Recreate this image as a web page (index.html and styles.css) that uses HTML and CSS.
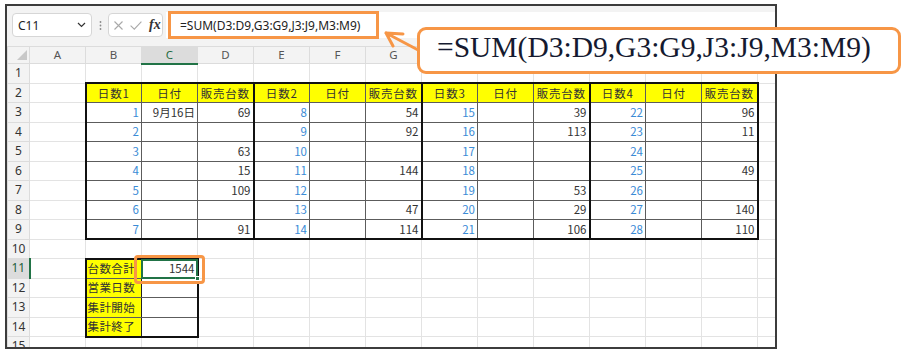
FILE: index.html
```html
<!DOCTYPE html>
<html lang="ja">
<head>
<meta charset="utf-8">
<title>Excel SUM</title>
<link rel="stylesheet" href="styles.css">
</head>
<body>
<div class="frame">
  <div class="toolbar">
    <div class="namebox"><span>C11</span>
      <svg class="chev" width="9" height="6" viewBox="0 0 9 6"><path d="M1 1L4.5 4.5L8 1" fill="none" stroke="#333" stroke-width="1.2"/></svg>
    </div>
    <div class="dots"><svg width="3" height="11" viewBox="0 0 3 11"><circle cx="1.5" cy="2" r="0.9" fill="#8a8a8a"/><circle cx="1.5" cy="5.5" r="0.9" fill="#8a8a8a"/><circle cx="1.5" cy="9" r="0.9" fill="#8a8a8a"/></svg></div>
    <div class="fxbox">
      <svg width="9" height="9" viewBox="0 0 9 9"><path d="M0.5 0.5L8.5 8.5M8.5 0.5L0.5 8.5" stroke="#a9a9a9" stroke-width="1.1"/></svg>
      <svg width="12" height="9" viewBox="0 0 12 9"><path d="M0.6 4.6L4.3 8.2L11.4 0.6" fill="none" stroke="#a9a9a9" stroke-width="1.1"/></svg>
      <span class="fx">fx</span>
    </div>
    <div class="formula"><span class="fhl">=SUM(D3:D9,G3:G9,J3:J9,M3:M9)</span></div>
  </div>
  <table class="sheet">
    <colgroup>
      <col class="c-rh"><col><col><col><col><col><col><col><col><col><col><col><col><col><col>
    </colgroup>
    <tr class="hdr">
      <th class="corner"><svg width="22" height="16" viewBox="0 0 22 16"><polygon points="19,3 19,13 9,13" fill="#c8c8c8"/></svg></th>
      <th>A</th><th>B</th><th class="csel">C</th><th>D</th><th>E</th><th>F</th><th>G</th><th>H</th><th>I</th><th>J</th><th>K</th><th>L</th><th>M</th><th>N</th>
    </tr>
    <tr><th class="rh">1</th><td></td><td></td><td></td><td></td><td></td><td></td><td></td><td></td><td></td><td></td><td></td><td></td><td></td><td></td></tr>
    <tr><th class="rh">2</th><td></td>
      <td class="d gl gt y">日数1</td><td class="d gt y">日付</td><td class="d gt y">販売台数</td>
      <td class="d gl gt y">日数2</td><td class="d gt y">日付</td><td class="d gt y">販売台数</td>
      <td class="d gl gt y">日数3</td><td class="d gt y">日付</td><td class="d gt y">販売台数</td>
      <td class="d gl gt y">日数4</td><td class="d gt y">日付</td><td class="d gt gr y">販売台数</td>
      <td></td></tr>
    <tr><th class="rh">3</th><td></td>
      <td class="d gl n">1</td><td class="d">9月16日</td><td class="d">69</td>
      <td class="d gl n">8</td><td class="d"></td><td class="d">54</td>
      <td class="d gl n">15</td><td class="d"></td><td class="d">39</td>
      <td class="d gl n">22</td><td class="d"></td><td class="d gr">96</td>
      <td></td></tr>
    <tr><th class="rh">4</th><td></td>
      <td class="d gl n">2</td><td class="d"></td><td class="d"></td>
      <td class="d gl n">9</td><td class="d"></td><td class="d">92</td>
      <td class="d gl n">16</td><td class="d"></td><td class="d">113</td>
      <td class="d gl n">23</td><td class="d"></td><td class="d gr">11</td>
      <td></td></tr>
    <tr><th class="rh">5</th><td></td>
      <td class="d gl n">3</td><td class="d"></td><td class="d">63</td>
      <td class="d gl n">10</td><td class="d"></td><td class="d"></td>
      <td class="d gl n">17</td><td class="d"></td><td class="d"></td>
      <td class="d gl n">24</td><td class="d"></td><td class="d gr"></td>
      <td></td></tr>
    <tr><th class="rh">6</th><td></td>
      <td class="d gl n">4</td><td class="d"></td><td class="d">15</td>
      <td class="d gl n">11</td><td class="d"></td><td class="d">144</td>
      <td class="d gl n">18</td><td class="d"></td><td class="d"></td>
      <td class="d gl n">25</td><td class="d"></td><td class="d gr">49</td>
      <td></td></tr>
    <tr><th class="rh">7</th><td></td>
      <td class="d gl n">5</td><td class="d"></td><td class="d">109</td>
      <td class="d gl n">12</td><td class="d"></td><td class="d"></td>
      <td class="d gl n">19</td><td class="d"></td><td class="d">53</td>
      <td class="d gl n">26</td><td class="d"></td><td class="d gr"></td>
      <td></td></tr>
    <tr><th class="rh">8</th><td></td>
      <td class="d gl n">6</td><td class="d"></td><td class="d"></td>
      <td class="d gl n">13</td><td class="d"></td><td class="d">47</td>
      <td class="d gl n">20</td><td class="d"></td><td class="d">29</td>
      <td class="d gl n">27</td><td class="d"></td><td class="d gr">140</td>
      <td></td></tr>
    <tr><th class="rh">9</th><td></td>
      <td class="d gl gb n">7</td><td class="d gb"></td><td class="d gb">91</td>
      <td class="d gl gb n">14</td><td class="d gb"></td><td class="d gb">114</td>
      <td class="d gl gb n">21</td><td class="d gb"></td><td class="d gb">106</td>
      <td class="d gl gb n">28</td><td class="d gb"></td><td class="d gb gr">110</td>
      <td></td></tr>
    <tr><th class="rh">10</th><td></td><td></td><td></td><td></td><td></td><td></td><td></td><td></td><td></td><td></td><td></td><td></td><td></td><td></td></tr>
    <tr><th class="rh rsel">11</th><td></td>
      <td class="d gl gt lbl">台数合計</td>
      <td class="d gr gt sel">1544<span class="selbox"></span><span class="handle"></span><span class="hl"></span></td>
      <td></td><td></td><td></td><td></td><td></td><td></td><td></td><td></td><td></td><td></td><td></td></tr>
    <tr><th class="rh">12</th><td></td>
      <td class="d gl lbl">営業日数</td><td class="d gr"></td>
      <td></td><td></td><td></td><td></td><td></td><td></td><td></td><td></td><td></td><td></td><td></td></tr>
    <tr><th class="rh">13</th><td></td>
      <td class="d gl lbl">集計開始</td><td class="d gr"></td>
      <td></td><td></td><td></td><td></td><td></td><td></td><td></td><td></td><td></td><td></td><td></td></tr>
    <tr><th class="rh">14</th><td></td>
      <td class="d gl gb lbl">集計終了</td><td class="d gr gb"></td>
      <td></td><td></td><td></td><td></td><td></td><td></td><td></td><td></td><td></td><td></td><td></td></tr>
    <tr><th class="rh">15</th><td></td><td></td><td></td><td></td><td></td><td></td><td></td><td></td><td></td><td></td><td></td><td></td><td></td><td></td></tr>
  </table>
</div>
<svg class="arrow" width="42" height="30" viewBox="0 0 42 30">
  <path d="M6 7L40 25M6 7L23 8M6 7L13 20" fill="none" stroke="#f79646" stroke-width="3" stroke-linecap="round"/>
</svg>
<div class="callout">=SUM(D3:D9,G3:G9,J3:J9,M3:M9)</div>
</body>
</html>
```
FILE: styles.css
```css
* { box-sizing: border-box; }
html, body { margin: 0; padding: 0; background: #fff; }
body {
  position: relative;
  width: 901px;
  height: 353px;
  overflow: hidden;
  font-family: "Noto Sans", "Noto Sans CJK JP", sans-serif;
}
.frame {
  margin: 4px 0 0 5px;
  width: 772px;
  height: 345px;
  border: 2px solid #3c3c3c;
  background: #f3f3f3;
  overflow: hidden;
}
.toolbar {
  display: flex;
  align-items: flex-start;
  height: 40px;
  padding: 7px 0 0 5px;
}
.namebox {
  width: 80px;
  height: 24px;
  background: #fff;
  border: 1px solid #d6d6d6;
  border-radius: 4px;
  display: flex;
  align-items: center;
  justify-content: space-between;
  padding: 0 5px 0 5px;
  font-size: 12px;
  color: #222;
}
.dots {
  width: 8px;
  height: 24px;
  margin-left: 4px;
  display: flex;
  align-items: center;
  justify-content: center;
}
.fxbox {
  margin-left: 4px;
  width: 55px;
  height: 24px;
  background: #fff;
  border: 1px solid #d6d6d6;
  border-radius: 4px;
  display: flex;
  align-items: center;
  padding-left: 5px;
  gap: 7px;
}
.fx {
  font-family: "Liberation Serif", serif;
  font-style: italic;
  font-weight: bold;
  font-size: 14px;
  color: #333;
  line-height: 1;
}
.formula {
  margin-left: 3px;
  margin-top: -1px;
  flex: 1;
  height: 26px;
  background: #fff;
  display: flex;
  align-items: flex-start;
}
.fhl {
  display: flex;
  align-items: center;
  height: 28px;
  margin: -1px 0 0 2px;
  border: 3px solid #f79646;
  padding: 0 16px 0 9px;
  font-size: 12px;
  color: #222;
  white-space: nowrap;
}

.sheet {
  border-collapse: collapse;
  table-layout: fixed;
  width: 806px;
  background: #fff;
  font-family: "Noto Sans CJK JP", "Noto Sans", sans-serif;
  font-size: 11.5px;
  color: #333;
}
.sheet col { width: 56px; }
.sheet col.c-rh { width: 22px; }
.sheet tr { height: 19.5px; }
.sheet tr.hdr { height: 16.5px; }
.sheet th {
  font-weight: normal;
  background: #f3f3f3;
  border: 1px solid #dcdcdc;
  padding: 0;
  font-family: "Noto Sans", sans-serif;
  font-size: 11.5px;
  line-height: 14px;
  color: #555;
}
.sheet th.corner { line-height: 0; vertical-align: bottom; }
.sheet th.rh { font-size: 12px; color: #333; text-align: center; }
.sheet th.csel {
  background: #dcdcdc;
  color: #1e6b41;
  border-bottom: 2px solid #217346;
}
.sheet th.rsel {
  background: #dcdcdc;
  color: #1e5e3a;
  border-right: 2px solid #217346;
}
.sheet td {
  border: 1px solid #e3e3e3;
  padding: 0 2px;
  line-height: 15px;
  text-align: right;
  white-space: nowrap;
}
.sheet td.d { border: 1px solid #5c5c5c; }
.sheet td.gl { border-left: 2px solid #111; }
.sheet td.gr { border-right: 2px solid #111; }
.sheet td.gt { border-top: 2px solid #111; }
.sheet td.gb { border-bottom: 2px solid #111; }
.sheet td.y {
  background: #ffff00;
  text-align: center;
  letter-spacing: 0.8px;
  padding: 0;
}
.sheet td.n { color: #3a8bd6; }
.sheet td.lbl {
  background: #ffff00;
  text-align: left;
  letter-spacing: 0.4px;
  padding-left: 1px;
  border-right-color: #222;
}
.sheet td.sel { position: relative; }
.selbox {
  position: absolute;
  left: -1px;
  top: -1px;
  right: -1px;
  bottom: -1px;
  border: 2px solid #217346;
}
.handle {
  position: absolute;
  right: -3px;
  bottom: -3px;
  width: 5px;
  height: 5px;
  background: #217346;
  border: 1px solid #fff;
}
.hl {
  position: absolute;
  left: -8px;
  top: -5px;
  right: -8px;
  bottom: -6px;
  border: 3.5px solid #f79646;
  border-radius: 4px;
}

.arrow {
  position: absolute;
  left: 380px;
  top: 26px;
}
.callout {
  position: absolute;
  left: 417px;
  top: 27px;
  width: 484px;
  height: 47px;
  border: 3px solid #f79646;
  border-radius: 9px;
  background: #fff;
  padding-left: 17px;
  font-family: "Liberation Serif", serif;
  font-size: 29.5px;
  line-height: 34px;
  color: #151a30;
  white-space: nowrap;
}
```
